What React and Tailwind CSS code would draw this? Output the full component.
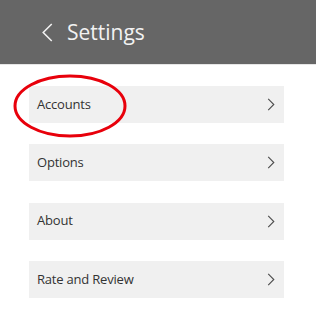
import React from "react";

const items = ["Accounts", "Options", "About", "Rate and Review"];

const Chevron = ({ className }) => (
  <svg viewBox="0 0 8 14" className={className} fill="none" stroke="currentColor" strokeWidth="1.2">
    <path d="M1 1l6 6-6 6" />
  </svg>
);

export default function App() {
  return (
    <div className="relative w-[316px] h-[327px] bg-white font-['Open_Sans',sans-serif] overflow-hidden">
      <div className="h-[65px] bg-[#666666] flex items-center pl-[41px] border-b border-[#e6e6e6]">
        <svg viewBox="0 0 12 20" className="w-[12px] h-[19px] text-[#f2f2f2]" fill="none" stroke="currentColor" strokeWidth="1.6">
          <path d="M11 1L2 10l9 9" />
        </svg>
        <span className="ml-[14px] text-[21px] text-[#f2f2f2] leading-none">Settings</span>
      </div>

      <div className="flex flex-col gap-[21.3px] pt-[21px] ml-[29px] w-[255px]">
        {items.map((label) => (
          <div key={label} className="h-[37px] bg-[#f0f0f0] flex items-center justify-between pl-[8px] pr-[9px]">
            <span className="text-[13px] tracking-[-0.2px] text-[#333333]">{label}</span>
            <Chevron className="w-[8px] h-[13px] text-[#4d4d4d]" />
          </div>
        ))}
      </div>

      <svg className="absolute left-0 top-0 pointer-events-none" width="316" height="327">
        <ellipse cx="70" cy="106" rx="55" ry="30" fill="none" stroke="#e8000b" strokeWidth="3" />
      </svg>
    </div>
  );
}
